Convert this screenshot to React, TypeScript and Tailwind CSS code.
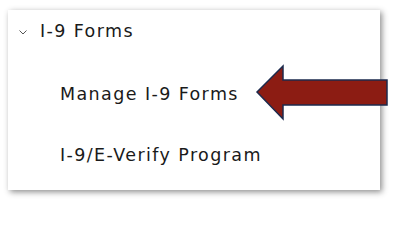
import React from "react";

export default function App() {
  return (
    <div className="w-[400px] h-[227px] bg-white pt-[10px] pl-[8px]" style={{ fontFamily: "'DejaVu Sans', sans-serif" }}>
      <div className="relative w-[372px] h-[180px] bg-white shadow-[2px_2px_6px_rgba(0,0,0,0.45)] text-[#1a1a1a] flex flex-col">
        <div className="flex items-center h-[44px] pl-[11px]">
          <svg width="8" height="5" viewBox="0 0 8 5" className="mr-[13px]">
            <path d="M0.5 0.5 L4 4 L7.5 0.5" fill="none" stroke="#555" strokeWidth="1" />
          </svg>
          <span className="text-[17.5px] leading-none tracking-[1.4px]">I-9 Forms</span>
        </div>
        <div className="flex items-center h-[62px] pl-[52px] mt-[10px]">
          <span className="text-[17.5px] leading-none tracking-[1.4px]">Manage I-9 Forms</span>
        </div>
        <div className="flex items-center h-[60px] pl-[52px]">
          <span className="text-[17.5px] leading-none tracking-[1.4px]">I-9/E-Verify Program</span>
        </div>
        <svg className="absolute left-[248px] top-[55px]" width="134" height="56" viewBox="0 0 134 56" style={{ overflow: "visible" }}>
          <polygon points="1,27 27,1 27,15 131,15 131,40 27,40 27,54" fill="#8c1c13" stroke="#1c2a4d" strokeWidth="1.5" strokeLinejoin="miter" />
        </svg>
      </div>
    </div>
  );
}
